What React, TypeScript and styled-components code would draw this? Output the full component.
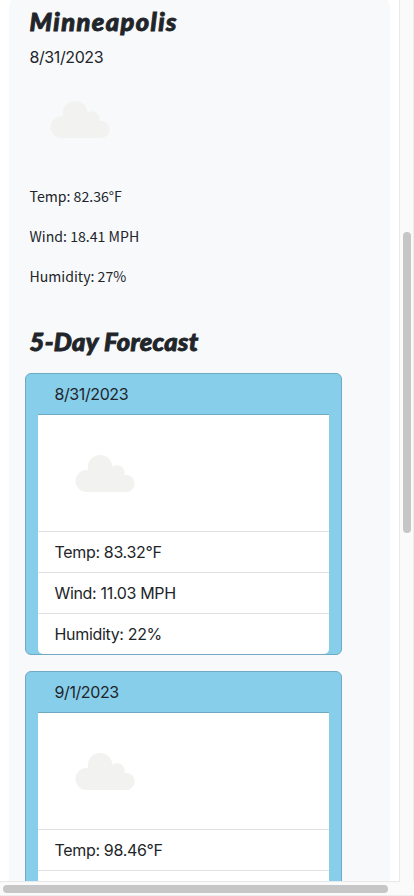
import React from "react";
import styled, { createGlobalStyle } from "styled-components";

const GlobalStyle = createGlobalStyle`
  *, *::before, *::after { box-sizing: border-box; }
  html, body { margin: 0; padding: 0; background: #fff; overflow: hidden; }
`;

const Window = styled.div`
  display: grid;
  grid-template-columns: 399px 15px;
  grid-template-rows: 881px 15px;
  width: 414px;
  height: 896px;
  overflow: hidden;
  background: #fafafa;
  color: #212529;
  font-family: Inter, "Liberation Sans", sans-serif;
  font-size: 16px;
  line-height: 24px;
`;

const Viewport = styled.main`
  overflow: hidden;
  background: #fff;
  padding-left: 9px;
`;

const Panel = styled.section`
  width: 381px;
  height: 1900px;
  margin-top: -3px;
  padding: 8px 48px 0 16px;
  border-radius: 10px;
  background: #f8f9fb;
`;

const Current = styled.div`
  height: 320px;
  padding-left: 4.5px;
`;

const Title = styled.h2<{ $spacing: number }>`
  margin: 0;
  height: 33px;
  font-family: Lato, sans-serif;
  font-size: 25.5px;
  font-weight: 900;
  font-style: italic;
  line-height: 32px;
  letter-spacing: ${(p) => p.$spacing}px;
  white-space: nowrap;
  -webkit-text-stroke: 0.9px #212529;
`;

const DateLine = styled.p`
  margin: 7px 0 0;
  letter-spacing: -0.4px;
`;

const Detail = styled.p<{ $first?: boolean }>`
  margin: ${(p) => (p.$first ? "15px" : "0")} 0 16px;
  font-family: "Noto Sans CJK JP", "Noto Sans", sans-serif;
  font-size: 14.1px;
  line-height: 24px;
`;

const ForecastTitle = styled.div`
  padding-left: 4.5px;
  height: 48px;
`;

const Card = styled.article`
  width: 317px;
  height: 282px;
  margin-bottom: 16px;
  padding: 0 12px;
  border: 1px solid #6faac2;
  border-radius: 6px;
  background: #87ceeb;
`;

const CardHeader = styled.header`
  height: 41px;
  padding: 8px 16.5px;
  border-bottom: 1px solid #6faac2;
  letter-spacing: -0.4px;
`;

const List = styled.ul`
  margin: 0;
  padding: 0;
  list-style: none;
  background: #fff;
  border-radius: 0 0 5px 5px;
`;

const Item = styled.li`
  min-height: 40px;
  padding: 8px 16.5px;
  letter-spacing: -0.33px;
  & + & { border-top: 1px solid #dee0e3; }
`;

const Picture = styled.svg`
  display: block;
  width: 100px;
  height: 100px;
`;

const VerticalTrack = styled.div`
  padding: 232px 0 0 3px;
  border-left: 1px solid #e8e8e8;
  border-right: 1px solid #ededed;
`;

const HorizontalTrack = styled.div`
  grid-column: 1 / 3;
  padding: 4px 0 0 3px;
  border-bottom: 1px solid #ededed;
  background: linear-gradient(#e8e8e8, #e8e8e8) 0 0 / 400px 1px no-repeat;
`;

const Thumb = styled.div<{ $w: number; $h: number }>`
  width: ${(p) => p.$w}px;
  height: ${(p) => p.$h}px;
  border-radius: 4px;
  background: #c6c6c6;
`;

const Cloud = () => (
  <Picture viewBox="0 0 100 100" aria-label="Cloudy" role="img">
    <g fill="#f2f2f0">
      <circle cx="31.5" cy="58" r="11" />
      <circle cx="45.1" cy="44.3" r="12.3" />
      <circle cx="62" cy="49.9" r="7.7" />
      <circle cx="71" cy="60.4" r="8.6" />
      <path d="M31.5 69 V50 H62 L71 56 V69 Z" />
    </g>
  </Picture>
);

const forecast = [
  { date: "8/31/2023", details: ["Temp: 83.32°F", "Wind: 11.03 MPH", "Humidity: 22%"] },
  { date: "9/1/2023", details: ["Temp: 98.46°F", ""] },
];

export default function App() {
  return (
    <>
      <GlobalStyle />
      <Window>
        <Viewport>
          <Panel>
            <Current>
              <Title $spacing={1.4}>Minneapolis</Title>
              <DateLine>8/31/2023</DateLine>
              <Cloud />
              <Detail $first>Temp: 82.36°F</Detail>
              <Detail>Wind: 18.41 MPH</Detail>
              <Detail>Humidity: 27%</Detail>
            </Current>
            <ForecastTitle>
              <Title $spacing={0.35}>5-Day Forecast</Title>
            </ForecastTitle>
            {forecast.map((day) => (
              <Card key={day.date}>
                <CardHeader>{day.date}</CardHeader>
                <List>
                  <Item><Cloud /></Item>
                  {day.details.map((text, i) => (
                    <Item key={i}>{text}</Item>
                  ))}
                </List>
              </Card>
            ))}
          </Panel>
        </Viewport>
        <VerticalTrack><Thumb $w={8} $h={301} /></VerticalTrack>
        <HorizontalTrack><Thumb $w={385} $h={8} /></HorizontalTrack>
      </Window>
    </>
  );
}
